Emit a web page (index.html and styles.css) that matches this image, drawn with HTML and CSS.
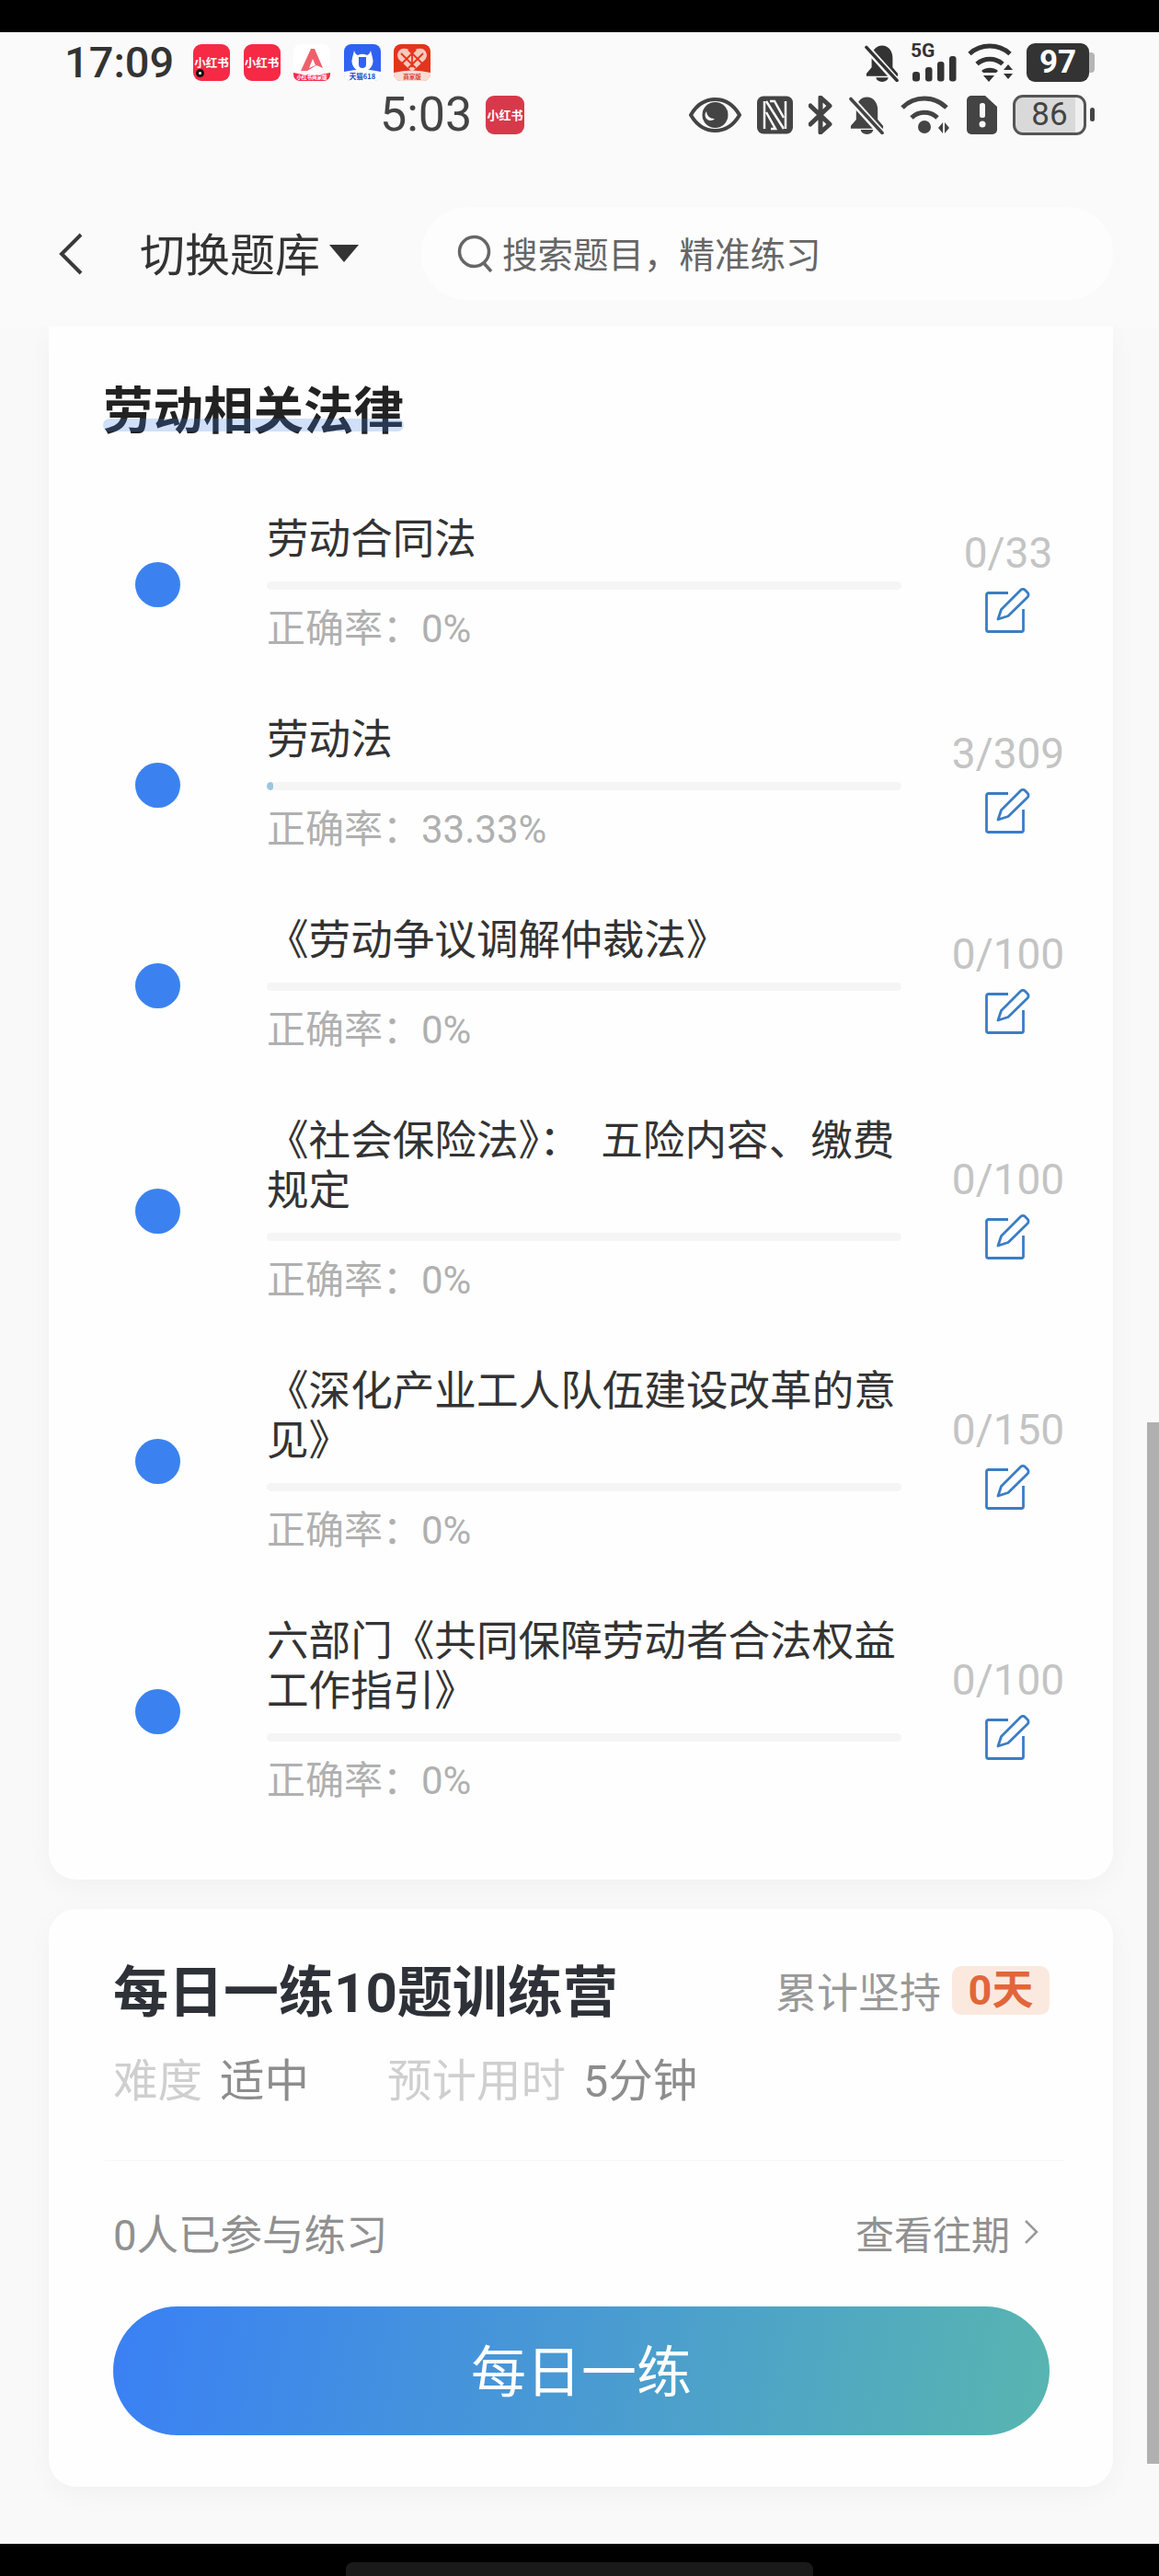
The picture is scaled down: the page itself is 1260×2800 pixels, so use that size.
FILE: index.html
```html
<!DOCTYPE html>
<html lang="zh-CN">
<head>
    <meta charset="UTF-8">
    <meta name="viewport" content="width=device-width, initial-scale=1.0">
    <title>切换题库</title>
    <link rel="stylesheet" href="styles.css">
</head>
<body>

<svg class="defs" width="0" height="0">
    <symbol id="edit" viewBox="0 0 50 50">
        <path d="M25 6.500H3.500a2 2 0 0 0-2 2v38a2 2 0 0 0 2 2h36a2 2 0 0 0 2-2V24" fill="none" stroke="#3b7dc4" stroke-width="2.800"/>
        <path d="M14 35l3.500-10.500L38.500 3.500a3.500 3.500 0 0 1 5 0l2.500 2.500a3.500 3.500 0 0 1 0 5L25 31.500z" fill="none" stroke="#3b7dc4" stroke-width="2.800" stroke-linejoin="round"/>
    </symbol>
    <symbol id="bell" viewBox="0 0 40 42">
        <path d="M20 1c-7 0-12 6-12 14v11l-6 7v3h36v-3l-6-7V15c0-8-5-14-12-14z" fill="currentColor"/>
        <path d="M13 37.500a7 5 0 0 0 14 0z" fill="currentColor"/>
        <path d="M1 2l36 40" stroke="#fafafa" stroke-width="8"/>
        <path d="M2 3l35 38" stroke="currentColor" stroke-width="3.600" stroke-linecap="round"/>
    </symbol>
</svg>

<div class="black-bar"></div>

<div class="top">
    <div class="status-row">
        <div class="status-left">
            <span class="time">17:09</span>
            <div class="app-icons">
                <div class="red-app">小红书<i class="red-dot"></i></div>
                <div class="red-app">小红书</div>
                <svg class="app" viewBox="0 0 40 40">
                    <rect width="40" height="40" rx="8" fill="#fff"/>
                    <path d="M19 5h4l9 21-7-3-10 6H8z" fill="#f0606c"/>
                    <path d="M21 16l3 7-7 3z" fill="#fff"/>
                    <path d="M0 31q20 5 40 0v2a7 7 0 0 1-7 7H7a7 7 0 0 1-7-7z" fill="#ee3048"/>
                    <text class="tiny" x="20" y="38" font-size="5.500" fill="#fff" text-anchor="middle">小红书商家版</text>
                </svg>
                <svg class="app" viewBox="0 0 40 40">
                    <rect width="40" height="40" rx="8" fill="#2f62f2"/>
                    <path d="M0 30q20-5 40 0v3a7 7 0 0 1-7 7H7a7 7 0 0 1-7-7z" fill="#fff"/>
                    <path d="M11 7q1 4 4 5a12 12 0 0 1 10 0q3-1 4-5l2 8a11.500 11.500 0 1 1-22 0z" fill="#fff"/>
                    <path d="M16 14h8v8a4 4 0 0 1-8 0z" fill="#2f62f2"/>
                    <text class="tiny" x="20" y="38" font-size="7.500" fill="#2248c8" text-anchor="middle">天猫618</text>
                </svg>
                <svg class="app" viewBox="0 0 40 40">
                    <rect width="40" height="40" rx="8" fill="#e5331e"/>
                    <path d="M0 31q20-5 40 0v2a7 7 0 0 1-7 7H7a7 7 0 0 1-7-7z" fill="#fbdcd2"/>
                    <path d="M20 30L6 17a7.500 7.500 0 0 1 3-12q7-1 11 4 4-5 11-4a7.500 7.500 0 0 1 3 12z" fill="#f9c9bb"/>
                    <path d="M8 10l16 16M16 6l16 16M32 10L16 26M24 6L8 22M20 9v16" stroke="#e5331e" stroke-width="1.800"/>
                    <text class="tiny" x="20" y="38" font-size="6.500" fill="#d8442f" text-anchor="middle">商家版</text>
                </svg>
            </div>
        </div>
        <div class="status-right">
            <svg class="ic-bell dark" width="38" height="41"><use href="#bell"/></svg>
            <div class="signal">
                <span class="sig-text">5G</span>
                <svg class="sig-bars" width="50" height="28" viewBox="0 0 50 28">
                    <rect x="2" y="17" width="8" height="10.500" rx="3" fill="#333"/>
                    <rect x="16" y="12" width="7.500" height="15.500" rx="3" fill="#333"/>
                    <rect x="29" y="6" width="7.500" height="21.500" rx="3" fill="#333"/>
                    <rect x="42" y="0" width="7.500" height="27.500" rx="3" fill="#333"/>
                </svg>
            </div>
            <svg class="ic-wifi" width="52" height="42" viewBox="0 0 52 42">
                <g fill="none" stroke="#333" stroke-width="5">
                    <path d="M2 11.500a33 33 0 0 1 44 0"/>
                    <path d="M10 22.500a21 21 0 0 1 28 0"/>
                </g>
                <path d="M14 31a14 14 0 0 1 18 0l-2 2H16z" fill="#333" transform="translate(1 -1)"/>
                <path d="M17 35h12l-6 7z" fill="#333"/>
                <path d="M39 29l5-6 5 6zM39 33l5 6 5-6z" fill="#333"/>
            </svg>
            <div class="battery-full"><span>97</span></div>
        </div>
    </div>

    <div class="status-row second">
        <div class="status-left">
            <span class="time big">5:03</span>
            <div class="red-app dim">小红书</div>
        </div>
        <div class="status-right wide">
            <svg width="57" height="42" viewBox="0 0 57 42">
                <path d="M2 21C9 9 18 4 28.500 4S48 9 55 21c-7 12-16.500 17-26.500 17S9 33 2 21z" fill="none" stroke="#444" stroke-width="4"/>
                <circle cx="28.500" cy="21" r="14" fill="#444"/>
                <path d="M19 17a8 8 0 0 0 9 8 6 6 0 0 1-9-8z" fill="#fafafa"/>
            </svg>
            <svg width="39" height="42" viewBox="0 0 39 42">
                <rect width="39" height="41" x="0" y="0.500" rx="7" fill="#444"/>
                <path d="M8 6v30M31 6v30" stroke="#fafafa" stroke-width="2.500"/>
                <path d="M10 6l19 30M14 6h5l10 18M10 18l10 18h-5" fill="none" stroke="#fafafa" stroke-width="2.500"/>
            </svg>
            <svg width="27" height="42" viewBox="0 0 27 42">
                <path d="M2 11l21 20-10 9V2l10 9L2 31" fill="none" stroke="#444" stroke-width="5" stroke-linejoin="round" stroke-linecap="round"/>
            </svg>
            <svg class="ic-bell mid" width="39" height="42"><use href="#bell"/></svg>
            <svg width="55" height="42" viewBox="0 0 55 42">
                <g fill="none" stroke="#444" stroke-width="5">
                    <path d="M2 13a34 34 0 0 1 48 0"/>
                    <path d="M12 24a20 20 0 0 1 28 0"/>
                </g>
                <circle cx="26" cy="34" r="7" fill="#444"/>
                <path d="M41 35l5-6v12zM48 29l5 6-5 6z" fill="#444"/>
            </svg>
            <svg width="33" height="42" viewBox="0 0 33 42">
                <path d="M5 0h15l13 12v25a5 5 0 0 1-5 5H5a5 5 0 0 1-5-5V5a5 5 0 0 1 5-5z" fill="#444"/>
                <rect x="14" y="8" width="6" height="16" rx="2.500" fill="#fafafa"/>
                <circle cx="17" cy="31" r="3.500" fill="#fafafa"/>
            </svg>
            <div class="battery-part"><span>86</span></div>
        </div>
    </div>

    <div class="nav">
        <svg class="back" width="26" height="46" viewBox="0 0 26 46">
            <path d="M24 2L3 23l21 21" fill="none" stroke="#3a3a3a" stroke-width="4"/>
        </svg>
        <span class="nav-title">切换题库</span>
        <i class="caret"></i>
        <div class="search">
            <svg width="40" height="41" viewBox="0 0 40 41">
                <circle cx="18.500" cy="18.500" r="16" fill="none" stroke="#666" stroke-width="3.500"/>
                <path d="M29 31l8 9" stroke="#666" stroke-width="3.500"/>
            </svg>
            <span class="search-text">搜索题目，精准练习</span>
        </div>
    </div>
</div>

<div class="content">
    <div class="card list-card">
        <h2 class="section-title">劳动相关法律</h2>

        <div class="row">
            <i class="dot"></i>
            <div class="row-main">
                <div class="row-title">劳动合同法</div>
                <div class="bar"></div>
                <div class="rate">正确率：0%</div>
            </div>
            <div class="row-side">
                <span class="count">0/33</span>
                <svg class="edit" width="50" height="50"><use href="#edit"/></svg>
            </div>
        </div>

        <div class="row">
            <i class="dot"></i>
            <div class="row-main">
                <div class="row-title">劳动法</div>
                <div class="bar"><div class="bar-fill" style="width: 1%"></div></div>
                <div class="rate">正确率：33.33%</div>
            </div>
            <div class="row-side">
                <span class="count">3/309</span>
                <svg class="edit" width="50" height="50"><use href="#edit"/></svg>
            </div>
        </div>

        <div class="row">
            <i class="dot"></i>
            <div class="row-main">
                <div class="row-title">《劳动争议调解仲裁法》</div>
                <div class="bar"></div>
                <div class="rate">正确率：0%</div>
            </div>
            <div class="row-side">
                <span class="count">0/100</span>
                <svg class="edit" width="50" height="50"><use href="#edit"/></svg>
            </div>
        </div>

        <div class="row">
            <i class="dot"></i>
            <div class="row-main">
                <div class="row-title">《社会保险法》： 五险内容、缴费规定</div>
                <div class="bar"></div>
                <div class="rate">正确率：0%</div>
            </div>
            <div class="row-side">
                <span class="count">0/100</span>
                <svg class="edit" width="50" height="50"><use href="#edit"/></svg>
            </div>
        </div>

        <div class="row">
            <i class="dot"></i>
            <div class="row-main">
                <div class="row-title">《深化产业工人队伍建设改革的意见》</div>
                <div class="bar"></div>
                <div class="rate">正确率：0%</div>
            </div>
            <div class="row-side">
                <span class="count">0/150</span>
                <svg class="edit" width="50" height="50"><use href="#edit"/></svg>
            </div>
        </div>

        <div class="row">
            <i class="dot"></i>
            <div class="row-main">
                <div class="row-title">六部门《共同保障劳动者合法权益工作指引》</div>
                <div class="bar"></div>
                <div class="rate">正确率：0%</div>
            </div>
            <div class="row-side">
                <span class="count">0/100</span>
                <svg class="edit" width="50" height="50"><use href="#edit"/></svg>
            </div>
        </div>
    </div>

    <div class="card daily-card">
        <div class="daily-head">
            <span class="daily-title">每日一练10题训练营</span>
            <div class="streak">
                <span>累计坚持</span>
                <span class="streak-badge">0天</span>
            </div>
        </div>
        <div class="daily-meta">
            <span class="meta-label">难度</span>
            <span class="meta-value first">适中</span>
            <span class="meta-label">预计用时</span>
            <span class="meta-value">5分钟</span>
        </div>
        <div class="divider"></div>
        <div class="daily-foot">
            <span class="joined">0人已参与练习</span>
            <div class="history">
                <span>查看往期</span>
                <svg width="16" height="28" viewBox="0 0 16 28">
                    <path d="M2 2l12 12L2 26" fill="none" stroke="#999" stroke-width="2.500"/>
                </svg>
            </div>
        </div>
        <button class="daily-btn">每日一练</button>
    </div>

    <div class="scrollbar"></div>
</div>

<div class="black-bar home"><div class="home-pill"></div></div>

</body>
</html>
```

FILE: styles.css
```css
* {
    box-sizing: border-box;
}
html, body {
    margin: 0;
    padding: 0;
}
body {
    width: 1260px;
    height: 2800px;
    display: flex;
    flex-direction: column;
    overflow: hidden;
    background-color: #f9f9f9;
    font-family: Roboto, "Noto Sans CJK SC", sans-serif;
    color: #333;
}
i {
    display: block;
}
svg {
    display: block;
    flex-shrink: 0;
}
.defs {
    position: absolute;
}

.black-bar {
    height: 35px;
    flex-shrink: 0;
    background-color: #000;
}
.home {
    display: flex;
    align-items: flex-end;
    justify-content: center;
}
.home-pill {
    width: 508px;
    height: 15px;
    background-color: #1a1a1a;
    border-radius: 8px 8px 0 0;
}

/* status bars + nav */
.top {
    height: 320px;
    flex-shrink: 0;
    background-color: #fafafa;
    padding-top: 12px;
    position: relative;
    z-index: 2;
}
.status-row {
    display: flex;
    align-items: center;
    justify-content: space-between;
    height: 42px;
    padding: 0 70px;
}
.status-row.second {
    margin-top: 15px;
    padding-left: 413px;
}
.status-left {
    display: flex;
    align-items: center;
}
.status-right {
    display: flex;
    align-items: center;
    gap: 12px;
}
.status-right.wide {
    gap: 17px;
}
.time {
    font-size: 47px;
    font-weight: 500;
    line-height: 42px;
    color: #333;
    width: 140px;
}
.time.big {
    font-size: 52px;
    font-weight: 400;
    color: #444;
    width: 115px;
}
.app-icons {
    display: flex;
    gap: 14.500px;
}
.app {
    width: 40px;
    height: 40px;
}
.tiny {
    font-family: "Noto Sans CJK SC", sans-serif;
    font-weight: 700;
}
.red-app {
    position: relative;
    width: 40px;
    height: 40px;
    background-color: #f62a45;
    border-radius: 9px;
    color: #fff;
    font-family: "Noto Sans CJK SC", sans-serif;
    font-size: 12.500px;
    font-weight: 700;
    line-height: 40px;
    text-align: center;
    white-space: nowrap;
}
.red-app.dim {
    width: 42px;
    height: 42px;
    line-height: 42px;
    font-size: 13px;
    background-color: #d8394a;
}
.red-dot {
    position: absolute;
    left: 3px;
    bottom: 4px;
    width: 9px;
    height: 9px;
    border: 3px solid #111;
    border-radius: 50%;
    background-color: #fff;
}
.ic-bell.dark {
    color: #333;
}
.ic-bell.mid {
    color: #444;
}
.signal {
    width: 50px;
    height: 42px;
    display: flex;
    flex-direction: column;
}
.sig-text {
    height: 14px;
    font-size: 21px;
    font-weight: 700;
    line-height: 16px;
    color: #333;
}
.battery-full {
    position: relative;
    width: 68px;
    height: 42px;
    margin-right: 6px;
    background-color: #333;
    border-radius: 9px;
    color: #fff;
    font-size: 35px;
    font-weight: 700;
    line-height: 42px;
    text-align: center;
}
.battery-full::after {
    content: "";
    position: absolute;
    right: -6px;
    top: 10px;
    width: 6px;
    height: 22px;
    background-color: #b5b5b5;
    border-radius: 0 4px 4px 0;
}
.battery-part {
    position: relative;
    width: 80px;
    height: 44px;
    margin-right: 9px;
    border: 3.500px solid #555;
    border-radius: 11px;
    background: linear-gradient(90deg, #d9d9d9 88%, #f0f0f0 88%);
    color: #444;
    font-size: 35px;
    line-height: 37px;
    text-align: center;
}
.battery-part::after {
    content: "";
    position: absolute;
    right: -12px;
    top: 11px;
    width: 5px;
    height: 15px;
    background-color: #444;
    border-radius: 3px;
}

.nav {
    display: flex;
    align-items: center;
    height: 101px;
    margin-top: 79px;
    padding: 0 50px 0 64px;
}
.nav-title {
    margin: 0 0 3px 62px;
    font-family: "Noto Sans CJK SC", sans-serif;
    font-size: 49px;
    line-height: 60px;
    color: #333;
}
.caret {
    width: 0;
    height: 0;
    margin-left: 10px;
    border-left: 16px solid transparent;
    border-right: 16px solid transparent;
    border-top: 19px solid #333;
}
.search {
    display: flex;
    align-items: center;
    gap: 9px;
    width: 752px;
    height: 101px;
    margin-left: auto;
    padding-left: 39px;
    background-color: #fdfdfd;
    border-radius: 50px;
    font-size: 38.500px;
    color: #666;
}
.search-text {
    margin-bottom: 3px;
}

/* cards */
.content {
    flex: 1;
    position: relative;
    overflow: hidden;
    padding: 0 50px 0 53px;
}
.card {
    background-color: #fefefe;
    box-shadow: 0 8px 30px rgba(0, 0, 0, 0.035);
}
.list-card {
    padding: 56px 44px 15px 59px;
    border-radius: 0 0 30px 30px;
}
.section-title {
    position: relative;
    display: inline-block;
    margin: 0 0 83px;
    font-family: "Noto Sans CJK SC", sans-serif;
    font-size: 54.500px;
    line-height: 64px;
    font-weight: 700;
    color: #222;
}
.section-title::after {
    content: "";
    position: absolute;
    left: 0;
    right: 0;
    bottom: 6px;
    height: 14px;
    background-color: rgba(59, 130, 230, 0.24);
    border-radius: 7px;
}
.row {
    display: flex;
    align-items: center;
    margin: 0 0 64px 35px;
}
.dot {
    width: 49px;
    height: 49px;
    margin-right: 94px;
    flex-shrink: 0;
    background-color: #3b82f0;
    border-radius: 50%;
}
.row-main {
    width: 690px;
    flex-shrink: 0;
}
.row-title {
    margin-top: 2px;
    font-size: 45.600px;
    line-height: 54px;
    word-spacing: 10px;
    color: #333;
}
.bar {
    height: 9px;
    margin-top: 18px;
    background-color: #f5f5f5;
    border-radius: 5px;
    overflow: hidden;
}
.bar-fill {
    height: 100%;
    background-color: #9cc6e0;
    border-radius: 5px;
}
.rate {
    margin: 21px 0 6px;
    font-size: 42px;
    line-height: 44px;
    color: #b0b0b0;
}
.row-side {
    display: flex;
    flex-direction: column;
    align-items: center;
    gap: 15px;
    width: 140px;
    margin-left: 46px;
}
.count {
    font-size: 46px;
    line-height: 44px;
    color: #c4c4c4;
}
.edit {
    margin-bottom: 3px;
}

.daily-card {
    margin-top: 32px;
    padding: 48px 69px 56px 70px;
    border-radius: 30px;
}
.daily-head {
    display: flex;
    align-items: center;
    justify-content: space-between;
    height: 80px;
}
.daily-title {
    margin-top: -6px;
    font-size: 60px;
    font-weight: 700;
    color: #2e3238;
}
.streak {
    display: flex;
    align-items: center;
    gap: 12px;
    font-size: 45px;
    color: #999;
}
.streak-badge {
    width: 106px;
    height: 53px;
    background-color: #fbe9df;
    border-radius: 10px;
    color: #e2663a;
    font-weight: 700;
    line-height: 53px;
    text-align: center;
}
.daily-meta {
    display: flex;
    align-items: center;
    height: 60px;
    margin-top: 25px;
    font-size: 48.500px;
}
.meta-label {
    color: #cfcfcf;
    margin-right: 19px;
}
.meta-value {
    color: #8d8d8d;
}
.meta-value.first {
    margin-right: 85px;
}
.divider {
    height: 1px;
    margin: 60px -16px 0 -9px;
    background-color: #f6f6f6;
}
.daily-foot {
    display: flex;
    align-items: center;
    justify-content: space-between;
    height: 60px;
    margin-top: 47px;
}
.joined {
    font-size: 45.500px;
    color: #909090;
}
.history {
    display: flex;
    align-items: center;
    gap: 15px;
    margin-right: 12px;
    font-size: 42px;
    color: #909090;
}
.daily-btn {
    display: block;
    width: 100%;
    height: 140px;
    margin-top: 51px;
    padding: 0 0 8px;
    border: none;
    border-radius: 70px;
    background: linear-gradient(100deg, #3a80f5, #58b5b0);
    color: #fff;
    font-family: "Noto Sans CJK SC", sans-serif;
    font-size: 60px;
    cursor: pointer;
}
.scrollbar {
    position: absolute;
    right: 0;
    top: 1191px;
    width: 13px;
    height: 1132px;
    background-color: #b0b0b0;
}
```
